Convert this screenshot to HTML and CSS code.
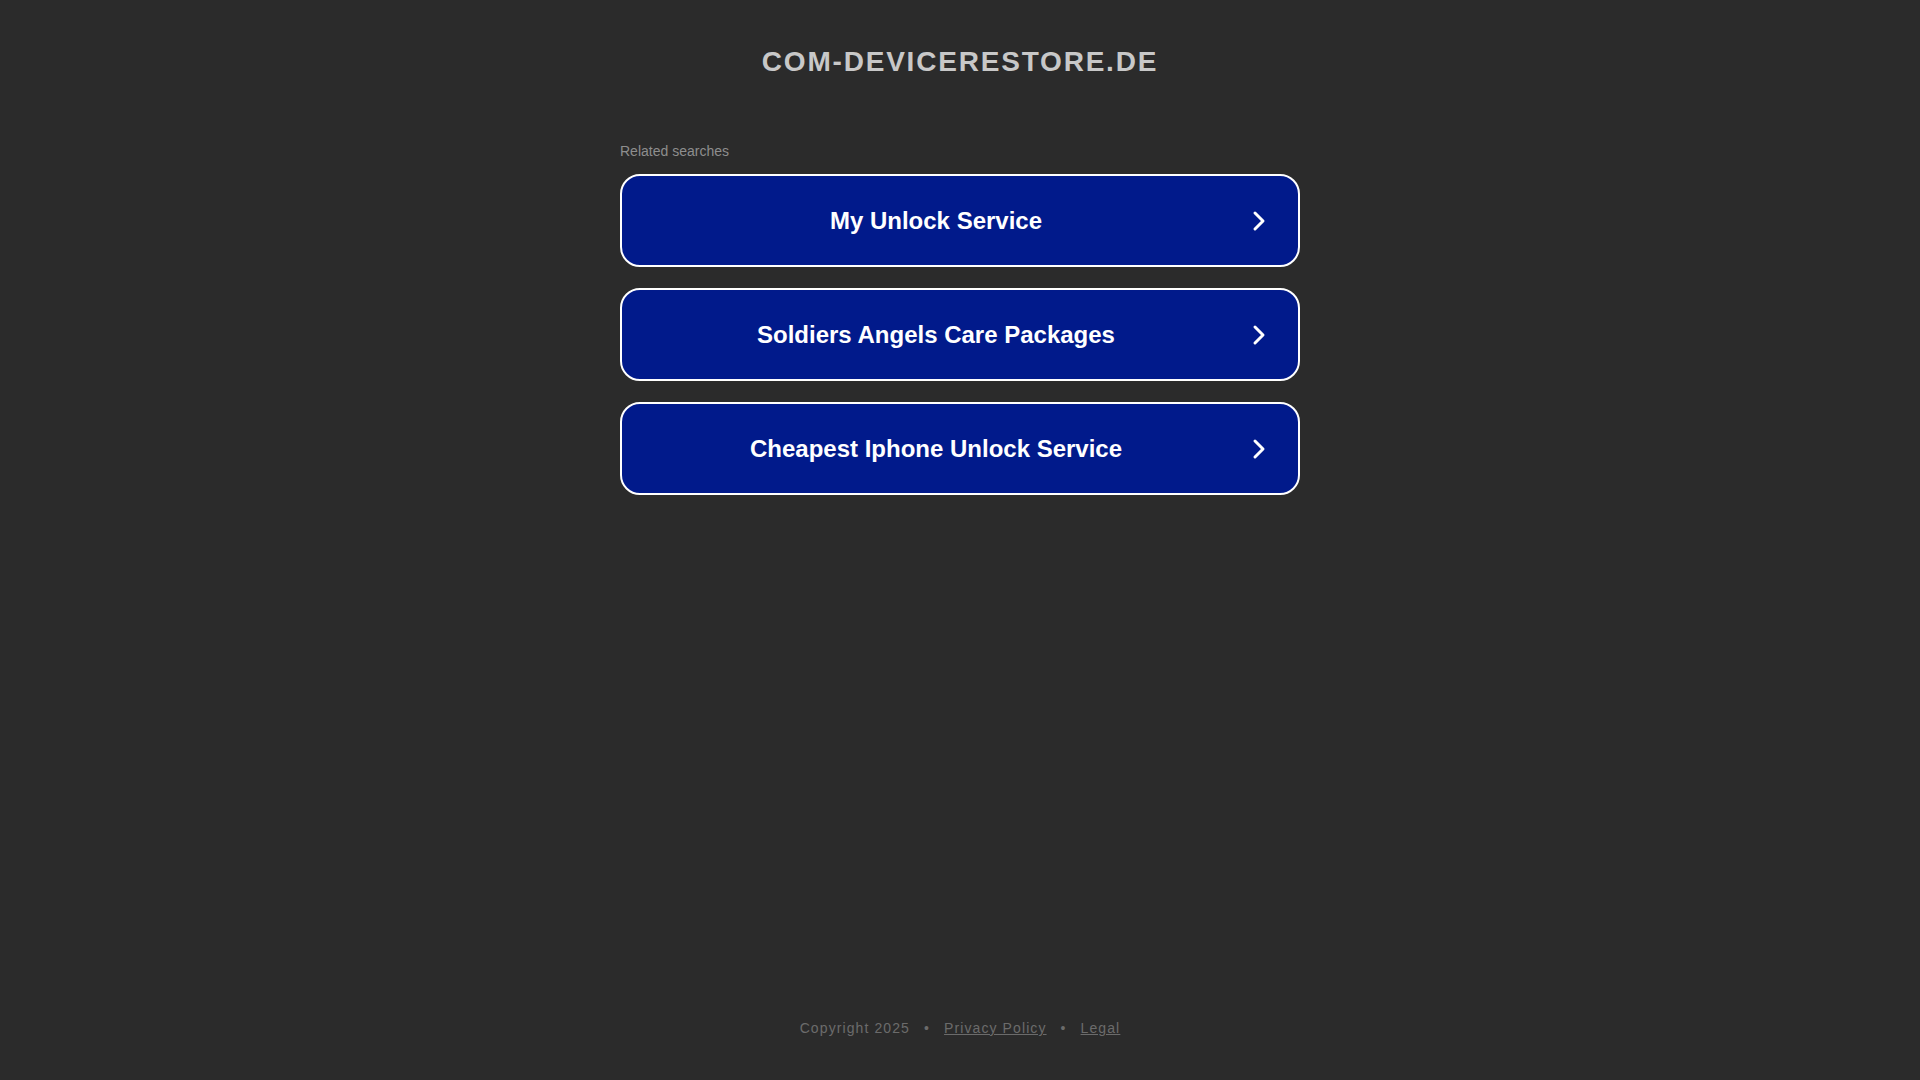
FILE: index.html
```html
<!DOCTYPE html>
<html lang="en">
<head>
<meta charset="utf-8">
<title>com-devicerestore.de</title>
<link rel="stylesheet" href="styles.css">
</head>
<body>
<div class="page">
  <header class="header">COM-DEVICERESTORE.DE</header>
  <main class="content">
    <div class="related">Related searches</div>
    <a class="item" href="#"><span class="label">My Unlock Service</span><svg class="chev" viewBox="0 0 14 22" width="14" height="22"><path d="M3 3 L11 11 L3 19" fill="none" stroke="#fff" stroke-width="3" stroke-linecap="round" stroke-linejoin="round"/></svg></a>
    <a class="item" href="#"><span class="label">Soldiers Angels Care Packages</span><svg class="chev" viewBox="0 0 14 22" width="14" height="22"><path d="M3 3 L11 11 L3 19" fill="none" stroke="#fff" stroke-width="3" stroke-linecap="round" stroke-linejoin="round"/></svg></a>
    <a class="item" href="#"><span class="label">Cheapest Iphone Unlock Service</span><svg class="chev" viewBox="0 0 14 22" width="14" height="22"><path d="M3 3 L11 11 L3 19" fill="none" stroke="#fff" stroke-width="3" stroke-linecap="round" stroke-linejoin="round"/></svg></a>
  </main>
  <footer class="footer">
    <span>Copyright 2025</span><span class="dot">•</span><a href="#">Privacy Policy</a><span class="dot">•</span><a href="#">Legal</a>
  </footer>
</div>
</body>
</html>
```

FILE: styles.css
```css
html, body {
  margin: 0;
  padding: 0;
  background: #2b2b2b;
  font-family: "Liberation Sans", Arial, sans-serif;
}
.page {
  min-height: 100vh;
  display: flex;
  flex-direction: column;
  align-items: center;
}
.header {
  margin-top: 45px;
  font-size: 28px;
  line-height: 34px;
  font-weight: bold;
  color: #c8c8c8;
  letter-spacing: 1.8px;
  text-align: center;
}
.content {
  width: 680px;
  margin-top: 64px;
  display: flex;
  flex-direction: column;
}
.related {
  font-size: 14px;
  line-height: 16px;
  color: #8e8e8e;
  margin-bottom: 15px;
}
.item {
  box-sizing: border-box;
  height: 93px;
  margin-bottom: 21px;
  border: 2px solid #ffffff;
  border-radius: 20px;
  background: #011a8b;
  display: flex;
  align-items: center;
  padding: 0 32px 0 18px;
  text-decoration: none;
}
.label {
  flex: 1;
  text-align: center;
  color: #ffffff;
  font-size: 24px;
  font-weight: bold;
}
.chev {
  display: block;
  margin-left: 20px;
}
.footer {
  margin-top: auto;
  margin-bottom: 43px;
  font-size: 14px;
  line-height: 18px;
  letter-spacing: 1.1px;
  color: #6b6b6b;
  display: flex;
}
.footer a {
  color: #6b6b6b;
}
.dot {
  margin: 0 14px;
}
```
